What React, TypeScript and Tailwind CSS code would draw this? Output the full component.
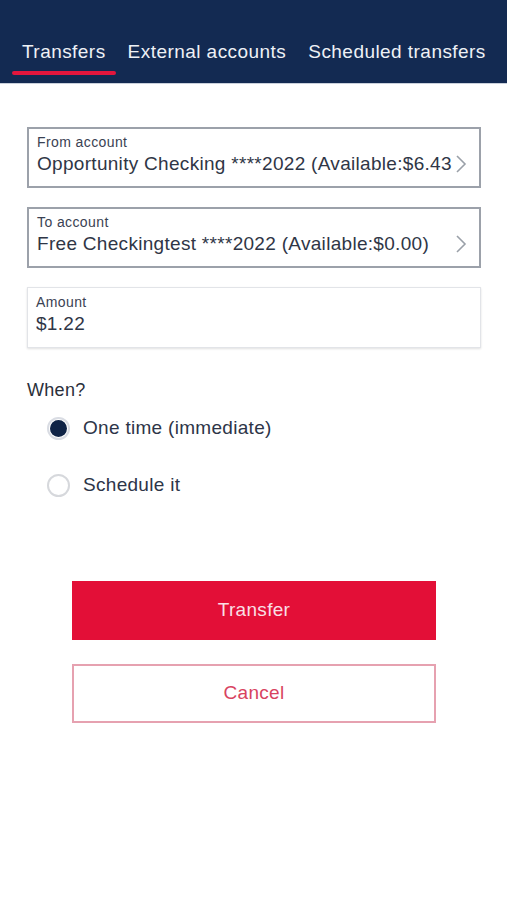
import React from 'react';

const Chevron = () => (
  <svg width="12" height="20" viewBox="0 0 12 20" className="shrink-0">
    <path d="M2 2 L10 10 L2 18" fill="none" stroke="#9aa0a8" strokeWidth="1.6" />
  </svg>
);

interface FieldProps {
  label: string;
  value: string;
  chevron?: boolean;
  soft?: boolean;
}

const Field: React.FC<FieldProps> = ({ label, value, chevron, soft }) => (
  <div
    className={`h-[61px] pl-[8px] pr-[12px] ${
      soft ? 'pt-[6px] border border-[#e2e4e8] shadow-[0_1px_2px_rgba(0,0,0,0.12)]' : 'pt-[5px] border-2 border-[#9ca1aa]'
    }`}
  >
    <div className="text-[14px] leading-[16px] tracking-[0.4px] text-[#3a4253]">{label}</div>
    <div className="flex items-center mt-[2px]">
      <div className="flex-1 min-w-0 text-[19px] leading-[24px] tracking-[0.3px] text-[#2f3646] whitespace-nowrap overflow-hidden">
        {value}
      </div>
      {chevron && <Chevron />}
    </div>
  </div>
);

const Radio: React.FC<{ checked?: boolean; label: string }> = ({ checked, label }) => (
  <div className="flex items-center gap-[13px] h-[28px]">
    {checked ? (
      <div className="w-[23px] h-[23px] rounded-full border-2 border-[#d9dce3] flex items-center justify-center">
        <div className="w-[17px] h-[17px] rounded-full bg-[#0f2346]" />
      </div>
    ) : (
      <div className="w-[23px] h-[23px] rounded-full border-2 border-[#d6d8dc] bg-white" />
    )}
    <span className="text-[19px] tracking-[0.3px] text-[#2d3548]">{label}</span>
  </div>
);

export default function App() {
  const tabs = ['Transfers', 'External accounts', 'Scheduled transfers'];
  return (
    <div className="w-[507px] min-h-[900px] bg-white" style={{ fontFamily: '"Liberation Sans", Arial, sans-serif' }}>
      {/* Header */}
      <div className="h-[84px] bg-[#132a52] flex items-end gap-[2px] pl-[12px] border-b border-[#c9d0db]">
        {tabs.map((t, i) => (
          <div key={t} className="flex flex-col px-[10px] relative">
            <span className="text-[19px] leading-[24px] tracking-[0.45px] text-[#eef1f6] whitespace-nowrap">{t}</span>
            <div className={`mt-[7px] mb-[8px] h-[4px] -mx-[10px] rounded-full ${i === 0 ? 'bg-[#e3163d]' : 'bg-transparent'}`} />
          </div>
        ))}
      </div>

      {/* Form */}
      <div className="px-[27px] pt-[43px] flex flex-col gap-[19px] w-[508px]">
        <Field label="From account" value="Opportunity Checking ****2022 (Available:$6.43" chevron />
        <Field label="To account" value="Free Checkingtest ****2022 (Available:$0.00)" chevron />
        <Field label="Amount" value="$1.22" soft />
      </div>

      <div className="px-[27px] pt-[28px]">
        <div className="text-[18px] leading-[28px] tracking-[0.3px] text-[#2a2f3a]">When?</div>
        <div className="pl-[20px] pt-[10px] flex flex-col gap-[29px]">
          <Radio checked label="One time (immediate)" />
          <Radio label="Schedule it" />
        </div>
      </div>

      {/* Buttons */}
      <div className="px-[72px] pt-[82px] flex flex-col gap-[24px] w-[508px]">
        <button className="h-[59px] bg-[#e30f37] text-[#f9dfe4] text-[19px] tracking-[0.3px]">Transfer</button>
        <button className="h-[59px] border-2 border-[#e6a1b0] text-[#d8435f] text-[19px] tracking-[0.3px] bg-white">Cancel</button>
      </div>
    </div>
  );
}
